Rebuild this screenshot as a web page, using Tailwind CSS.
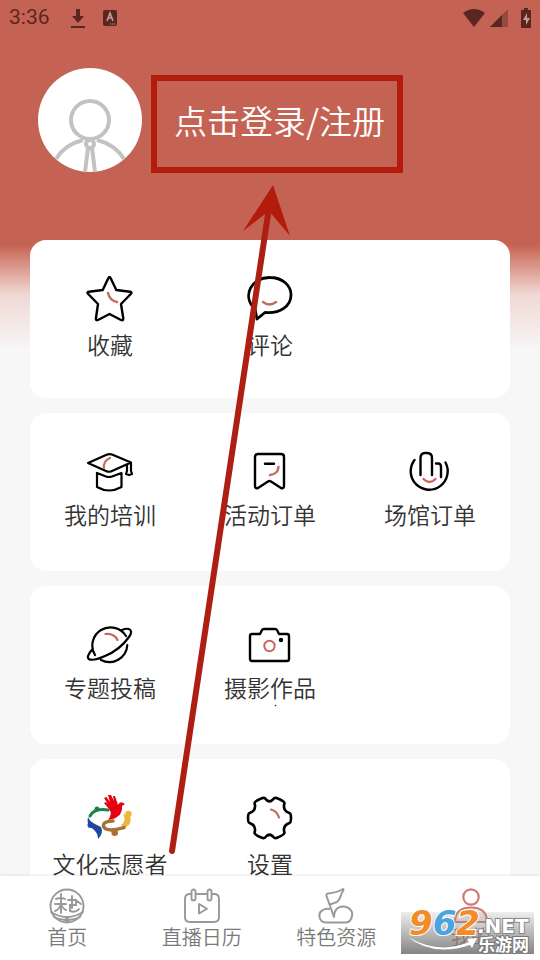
<!DOCTYPE html>
<html lang="zh-CN">
<head>
  <meta charset="UTF-8" />
  <meta name="viewport" content="width=device-width, initial-scale=1.0"/>
  <title>我的</title>
  <script src="https://cdn.jsdelivr.net/npm/@tailwindcss/browser@4"></script>
</head>
<body class="bg-[#f7f7f7] font-['Noto_Sans_CJK_SC',sans-serif] font-[350] text-[#333]">
  <div class="relative flex h-screen flex-col overflow-hidden">

    <!-- red background behind the header -->
    <div class="absolute inset-x-0 top-0 h-[350px] bg-linear-to-b from-[#c46353] from-70% via-[#efd8d3] via-84% to-[#f7f7f7]"></div>

    <div class="relative min-h-0 flex-1 overflow-hidden">
      <!-- status bar -->
      <div class="flex h-9 items-center justify-between pl-[9px] pr-2 text-[#5a2620]">
        <div class="flex items-center">
          <span class="font-[Roboto,sans-serif] text-[21px] font-normal">3:36</span>
          <svg class="ml-5 h-6 w-4" viewBox="0 0 16 24" fill="currentColor"><path d="M6 3h4v7h4l-6 7-6-7h4zM1 20h14v2H1z"/></svg>
          <svg class="ml-4 h-4 w-4" viewBox="0 0 16 16"><rect x="1" y="0" width="14" height="16" rx="2" fill="currentColor"/><path d="M5 11l3-8 3 8M6 8h4" fill="none" stroke="#c99a92" stroke-width="1.6"/><path d="M8 14h6" stroke="#c99a92" stroke-dasharray="1 1"/></svg>
        </div>
        <div class="flex items-center">
          <svg class="h-5 w-6" viewBox="0 0 24 20" fill="currentColor"><path d="M1 5Q12-3 23 5L12 19z"/></svg>
          <svg class="ml-1 h-5 w-[18px]" viewBox="0 0 18 20"><path d="M18 1v18H0z" fill="#96493e"/><path d="M12 7v12H0z" fill="currentColor"/></svg>
          <svg class="ml-3 h-5 w-3" viewBox="0 0 12 20"><path d="M4 0h4v2h3v18H1V2h3z" fill="currentColor"/><path d="M7 5l-4 7h3v5l4-7H7z" fill="#c99a92"/></svg>
        </div>
      </div>

      <!-- user -->
      <div class="flex items-center pt-8 pb-[68px] pl-[38px]">
        <svg class="h-[104px] w-[104px] shrink-0 rounded-full bg-white" viewBox="0 0 104 104" fill="none" stroke="#c2c2c2" stroke-width="4">
          <circle cx="52" cy="52" r="19"/>
          <path d="M18 91C24 81 33 75 45 72M86 91C80 81 71 75 59 72M50 80L47 104M54 80L57 104"/>
          <circle cx="52" cy="76" r="4"/>
        </svg>
        <button type="button" class="ml-8 text-[33px] leading-10 font-[350] text-white">点击登录/注册</button>
      </div>

      <!-- menu cards -->
      <main class="flex flex-col gap-[15px] px-[30px]">
        <section class="grid h-[158px] shrink-0 grid-cols-3 rounded-2xl bg-white pt-9">
          <a href="#" class="flex flex-col items-center gap-1 text-[23px] leading-8">
            <svg class="h-12 w-12" viewBox="0 0 48 48" fill="none" stroke="#000" stroke-width="2.4" stroke-linejoin="round" stroke-linecap="round">
              <path d="M22.3 2.2Q23.5 0 24.7 2.2L30.3 14 44 15.7Q46.5 16.2 44.8 18L35 28 37.3 42.5Q37.3 45 35 44L23.5 38 12 44Q9.7 45 9.9 42.5L12 28 2.2 18Q.5 16.2 3 15.7L16.7 14z"/>
              <path d="M22 17Q24 25 31 26" stroke="#c46a60"/>
            </svg>
            <span>收藏</span>
          </a>
          <a href="#" class="flex flex-col items-center gap-1 text-[23px] leading-8">
            <svg class="h-12 w-12" viewBox="0 0 48 48" fill="none" stroke="#000" stroke-width="2.8" stroke-linejoin="round" stroke-linecap="round">
              <path d="M11 43L9 33C-5 20 6 1 24 1.500 36 1.500 45 9 45 19 45 30 34 38 19 36.500z"/>
              <path d="M17 26Q23.500 31 30 26" stroke="#c46a60" stroke-width="2.400"/>
            </svg>
            <span>评论</span>
          </a>
        </section>

        <section class="grid h-[158px] shrink-0 grid-cols-3 rounded-2xl bg-white pt-9">
          <a href="#" class="flex flex-col items-center gap-px text-[23px] leading-8">
            <svg class="h-12 w-12" viewBox="0 0 48 48" fill="none" stroke="#000" stroke-width="2.2" stroke-linejoin="round" stroke-linecap="round">
              <path d="M2 14L20 6Q23 4.500 26 5.500L45 13.500 26 22Q23 23.500 20 22zM11 24V38Q23 45 35.500 38V24L26 27.500Q23 28.500 20 27.500zM41 16V22L40 25 43 26M45 14V22L46 25 43 26"/>
              <path d="M24 9Q17 12 18 19" stroke="#c46a60"/>
            </svg>
            <span>我的培训</span>
          </a>
          <a href="#" class="flex flex-col items-center gap-px text-[23px] leading-8">
            <svg class="h-12 w-12" viewBox="0 0 48 48" fill="none" stroke="#000" stroke-width="2.4" stroke-linejoin="round" stroke-linecap="round">
              <path d="M12 5H35Q38 5 38 8V37Q38 40 35 39L25 32.500Q23.500 31.500 22 32.500L12 39Q9 40 9 37V8Q9 5 12 5zM19 14.700H28"/>
              <path d="M32.500 18Q32 25 24 26" stroke="#c46a60"/>
            </svg>
            <span>活动订单</span>
          </a>
          <a href="#" class="flex flex-col items-center gap-px text-[23px] leading-8">
            <svg class="h-12 w-12" viewBox="0 0 48 48" fill="none" stroke="#000" stroke-width="2.4" stroke-linejoin="round" stroke-linecap="round">
              <path d="M8.500 11A18.500 18.500 0 1 0 39.500 13.500M14.500 26V9Q14.500 4 19 4H21Q26 4 26 9V26M30 14.500H32Q35 14.500 35 18V28"/>
              <path d="M17.500 30Q23.500 36 29.500 30" stroke="#c46a60"/>
            </svg>
            <span>场馆订单</span>
          </a>
        </section>

        <section class="grid h-[158px] shrink-0 grid-cols-3 rounded-2xl bg-white pt-9">
          <a href="#" class="flex flex-col items-center gap-px text-[23px] leading-8">
            <svg class="h-12 w-12" viewBox="0 0 48 48" fill="none" stroke="#000" stroke-width="2.2" stroke-linejoin="round" stroke-linecap="round">
              <path d="M9 33A18 18 0 1 1 40 14M41.300 23A18 18 0 0 1 15 38M36 8C43 5 48 8 43 15 38 22 29 30 19 34 8 39 1 39 2 34Q3 31 6.500 27"/>
              <path d="M19.500 12Q28 11 31.500 18" stroke="#c46a60"/>
            </svg>
            <span>专题投稿</span>
          </a>
          <a href="#" class="flex flex-col items-center gap-px text-[23px] leading-8">
            <svg class="h-12 w-12" viewBox="0 0 48 48" fill="none" stroke="#000" stroke-width="2.400" stroke-linejoin="round" stroke-linecap="round">
              <path d="M6 12H14L16 8Q16.500 7 18 7H29Q30.500 7 31 8L33 12H41Q43 12 43 14V37Q43 39 41 39H6Q4 39 4 37V14Q4 12 6 12z"/>
              <circle cx="35" cy="18" r="1" fill="#000"/>
              <circle cx="23.500" cy="24" r="5.200" stroke="#c46a60" stroke-width="2"/>
            </svg>
            <span>摄影作品</span>
          </a>
        </section>

        <section class="grid h-[158px] shrink-0 grid-cols-3 rounded-2xl bg-white pt-9">
          <a href="#" class="flex flex-col items-center gap-1 text-[23px] leading-8">
            <svg class="h-12 w-12" viewBox="0 0 48 48" fill="none" stroke-linecap="round">
              <path d="M4 21Q8 13 22 15" stroke="#16834a" stroke-width="3"/>
              <circle cx="11" cy="14" r="2.500" fill="#16834a"/>
              <path d="M2 22Q4 27 9 29L15 32Q18 38 12 44 12 38 7 34 0 30 2 22z" fill="#1b4a9c"/>
              <circle cx="4.500" cy="30" r="3" fill="#1b4a9c"/>
              <path d="M23 14L18 8 20 7 22 9 18 3 20.500 2 24 7 22 0 25 0 28 6 27 1 29 1 32 10Q34 5 39 9L36 11Q37 23 22 25 27 19 23 14z" fill="#e60012"/>
              <circle cx="42.500" cy="19" r="3.200" fill="#f0b63c"/>
              <path d="M37 19L44 21Q47 28 39 33L35 30Q41 26 37 19z" fill="#f0b63c"/>
              <path d="M27 26C17 26 15 31 20 34 26 36.500 33 34 38 32.500" stroke="#a87236" stroke-width="3.500"/>
              <circle cx="28.700" cy="37.700" r="3.300" fill="#a87236"/>
            </svg>
            <span class="whitespace-nowrap">文化志愿者</span>
          </a>
          <a href="#" class="flex flex-col items-center gap-1 text-[23px] leading-8">
            <svg class="h-12 w-12" viewBox="0 0 48 48" fill="none" stroke="#000" stroke-width="2.600" stroke-linejoin="round" stroke-linecap="round">
              <path d="M43.500 18Q45 18.500 45 23T43.500 28Q36.200 30.400 38.500 38Q38 40 30.500 43Q28 43.500 27 41.500 23.500 38 20 41.500 19 43.500 16.500 43 9 40 8.500 38 10.800 30.400 3.500 28 2 27.500 2 23T3.500 18Q10.800 15.600 8.500 8 9 6 16.500 3 19 2.500 20 4.500 23.500 8 27 4.500 28 2.500 30.500 3 38 6 38.500 8 36.200 15.600 43.500 18z"/>
              <path d="M25 14.500Q31 16 33 22.500" stroke="#c46a60" stroke-width="2.200"/>
            </svg>
            <span>设置</span>
          </a>
        </section>
      </main>
    </div>

    <!-- bottom tabs -->
    <nav class="relative grid shrink-0 grid-cols-4 bg-white pt-3 pr-0.5 pb-2.5 text-[20px] leading-[26px] text-[#7a7a7a] shadow-[0_-1px_3px_rgba(0,0,0,0.08)]">
      <a href="#" class="flex flex-col items-center">
        <svg class="h-9 w-9" viewBox="0 0 36 36" fill="none" stroke="#999" stroke-width="1.900" stroke-linecap="round">
          <circle cx="18" cy="18" r="16.500"/>
          <path d="M12 6V25M7 11Q12 9 16 11M6 16H17M12 16Q10 22 6 23M12 16Q14 21 17 22M19 12H27V17H21V23Q27 25 30 21M23 8V20M28 13L32 16M2 24Q10 29 17 29V34M34 24Q26 29 19 29V34M5 29Q11 32 16 32M31 29Q25 32 20 32"/>
        </svg>
        <span>首页</span>
      </a>
      <a href="#" class="flex flex-col items-center">
        <svg class="h-9 w-9" viewBox="0 0 36 36" fill="none" stroke="#999" stroke-width="1.900" stroke-linejoin="round">
          <path d="M7 6H6Q1 6 1 11V29Q1 34 6 34H30Q35 34 35 29V11Q35 6 30 6H28M12 6H23M15 16V25.500L23 20.700z"/>
          <rect x="7.500" y="1.500" width="4" height="11" rx="2"/>
          <rect x="23.500" y="1.500" width="4" height="11" rx="2"/>
        </svg>
        <span>直播日历</span>
      </a>
      <a href="#" class="flex flex-col items-center">
        <svg class="h-9 w-9" viewBox="0 0 36 36" fill="none" stroke="#999" stroke-width="2" stroke-linejoin="round" stroke-linecap="round">
          <path d="M16 29C16 20 22 18 26 18.500 32 19 35 24 34 28 33 33 31 34.500 28 34.500H8C1 34.500-1 25 5 22Q8 20 11 21M16 29L8.500 8Q8 6 10 5.500C16 5 20 4 25 1Q26 1 25 3C22 7 23 11 19 14Q16 15 12 16.500"/>
        </svg>
        <span>特色资源</span>
      </a>
      <a href="#" class="flex flex-col items-center text-[#b8695e]">
        <svg class="h-9 w-9" viewBox="0 0 36 36" fill="none" stroke="#cf7b70" stroke-width="2.200" stroke-linecap="round">
          <circle cx="18" cy="9" r="7.700"/>
          <path d="M2 34C2 24 8 19.500 18 19.500S34 24 34 34z" fill="#f8e4e1"/>
        </svg>
        <span>我的</span>
      </a>
    </nav>

    <!-- site watermark -->
    <div class="absolute right-[6px] bottom-[6px] h-[42px] w-[133px] bg-linear-to-b from-[#aaa]/20 to-[#777]/90 leading-none font-bold whitespace-nowrap text-white">
      <svg class="absolute inset-0 h-full w-full" viewBox="0 0 133 42" fill="#fff"><path d="M7 25Q38 43 68 30L66 27 76 26 71 36 69 33Q32 45 7 25z"/></svg>
      <div class="absolute -top-1.5 left-2 font-['DejaVu_Sans',sans-serif] text-[34px] text-[#f28c28] italic [-webkit-text-stroke:2px_white] [paint-order:stroke_fill]">9<span class="text-[#4ba3e0]">6</span>2</div>
      <div class="absolute top-1 left-[76px] font-['DejaVu_Sans',sans-serif] text-[20px] [-webkit-text-stroke:2px_#888] [paint-order:stroke_fill]">.NET</div>
      <div class="absolute top-[23px] left-[77px] text-[17px] [-webkit-text-stroke:2px_#777] [paint-order:stroke_fill]">乐游网</div>
    </div>

    <!-- pointer to the login button -->
    <svg class="pointer-events-none absolute top-0 left-0 h-[960px] w-[540px]" viewBox="0 0 540 960" fill="none">
      <rect x="154" y="78" width="246" height="92" stroke="#b31b0c" stroke-width="6"/>
      <path d="M172 851L269 208" stroke="#ad1e13" stroke-width="6" stroke-linecap="round"/>
      <path d="M273 185L290 236 269 211 243 231z" fill="#b31b0c"/>
      <circle cx="275.500" cy="705.500" r=".8" fill="#222"/>
    </svg>
  </div>
</body>
</html>
